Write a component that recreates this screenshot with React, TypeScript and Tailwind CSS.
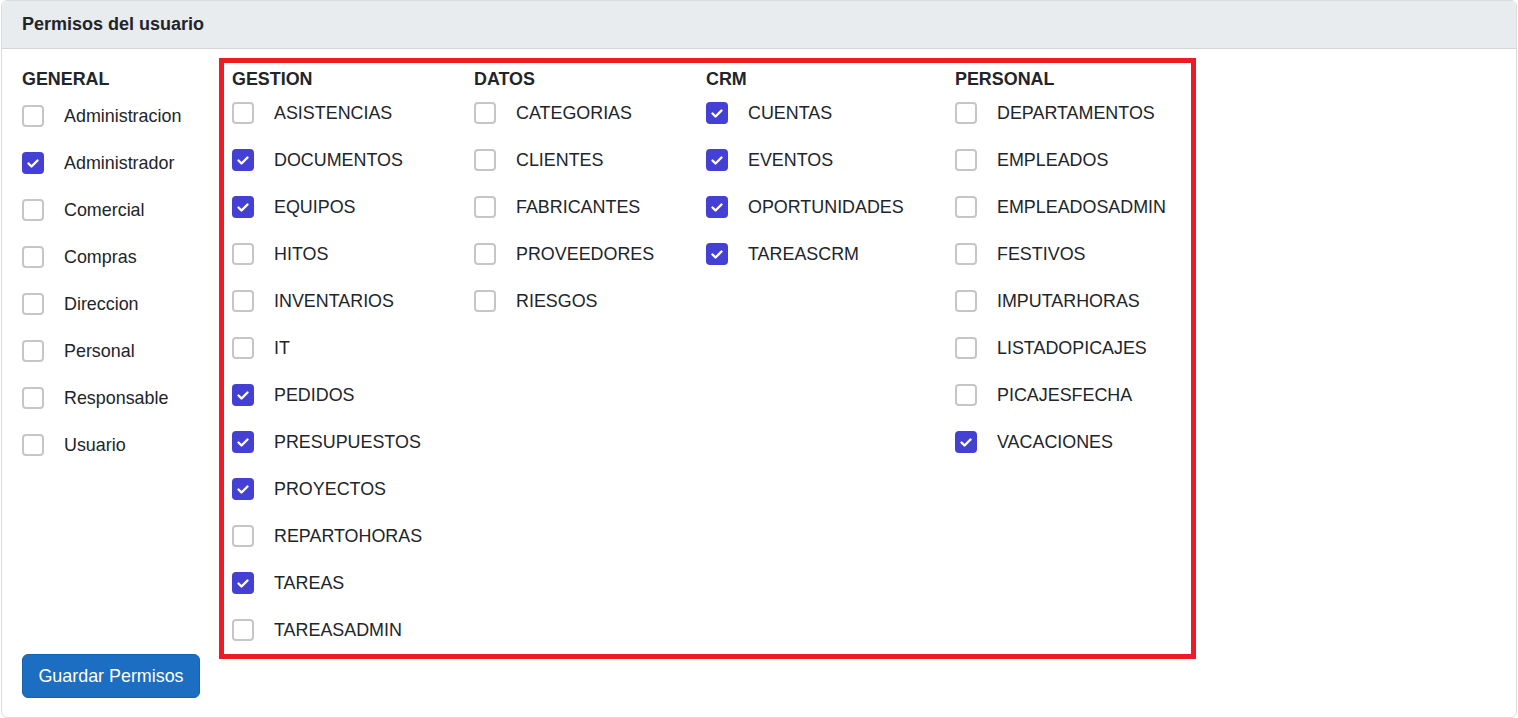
import React from "react";

type Perm = { name: string; on: boolean };

const general: Perm[] = [
  { name: "Administracion", on: false },
  { name: "Administrador", on: true },
  { name: "Comercial", on: false },
  { name: "Compras", on: false },
  { name: "Direccion", on: false },
  { name: "Personal", on: false },
  { name: "Responsable", on: false },
  { name: "Usuario", on: false },
];

const groups: { title: string; width: string; items: Perm[] }[] = [
  {
    title: "GESTION",
    width: "w-[242px]",
    items: [
      { name: "ASISTENCIAS", on: false },
      { name: "DOCUMENTOS", on: true },
      { name: "EQUIPOS", on: true },
      { name: "HITOS", on: false },
      { name: "INVENTARIOS", on: false },
      { name: "IT", on: false },
      { name: "PEDIDOS", on: true },
      { name: "PRESUPUESTOS", on: true },
      { name: "PROYECTOS", on: true },
      { name: "REPARTOHORAS", on: false },
      { name: "TAREAS", on: true },
      { name: "TAREASADMIN", on: false },
    ],
  },
  {
    title: "DATOS",
    width: "w-[232px]",
    items: [
      { name: "CATEGORIAS", on: false },
      { name: "CLIENTES", on: false },
      { name: "FABRICANTES", on: false },
      { name: "PROVEEDORES", on: false },
      { name: "RIESGOS", on: false },
    ],
  },
  {
    title: "CRM",
    width: "w-[249px]",
    items: [
      { name: "CUENTAS", on: true },
      { name: "EVENTOS", on: true },
      { name: "OPORTUNIDADES", on: true },
      { name: "TAREASCRM", on: true },
    ],
  },
  {
    title: "PERSONAL",
    width: "w-[240px]",
    items: [
      { name: "DEPARTAMENTOS", on: false },
      { name: "EMPLEADOS", on: false },
      { name: "EMPLEADOSADMIN", on: false },
      { name: "FESTIVOS", on: false },
      { name: "IMPUTARHORAS", on: false },
      { name: "LISTADOPICAJES", on: false },
      { name: "PICAJESFECHA", on: false },
      { name: "VACACIONES", on: true },
    ],
  },
];

function Check({ on }: { on: boolean }) {
  if (on) {
    return (
      <span className="w-[22px] h-[22px] rounded-[4px] bg-[#4540d4] flex items-center justify-center flex-shrink-0">
        <svg width="20" height="20" viewBox="0 0 20 20" fill="none">
          <path d="M5.5 10.5l3 3l6-6" stroke="#fff" strokeWidth="2.4" strokeLinecap="round" strokeLinejoin="round" />
        </svg>
      </span>
    );
  }
  return <span className="w-[22px] h-[22px] rounded-[4px] border-2 border-[#c6c6c6] bg-white flex-shrink-0" />;
}

function Row({ item }: { item: Perm }) {
  return (
    <div className="h-[47px] flex items-center gap-[20px]">
      <Check on={item.on} />
      <span className="leading-[26px] whitespace-nowrap">{item.name}</span>
    </div>
  );
}

export default function App() {
  return (
    <div
      className="relative mx-px h-[718px] border border-[#dcdcdc] rounded-[6px] bg-white text-[#212529] text-[17.9px]"
      style={{ fontFamily: '"Liberation Sans", Arial, sans-serif' }}
    >
      <div className="h-[48px] px-[20px] flex items-center bg-[#e9ecef] border-b border-[#d2d4d7] rounded-t-[6px]">
        <span className="font-bold text-[18px]">Permisos del usuario</span>
      </div>

      <div className="pl-[20px] pt-[18px]">
        <div className="flex">
          <div className="w-[210px]">
            <h3 className="font-bold leading-[24px] -mb-[2px]">GENERAL</h3>
            <div className="mt-[3px]">
              {general.map((p) => (
                <Row key={p.name} item={p} />
              ))}
            </div>
          </div>
          {groups.map((g) => (
            <div key={g.title} className={g.width}>
              <h3 className="font-bold leading-[24px] -mb-[2px]">{g.title}</h3>
              {g.items.map((p) => (
                <Row key={p.name} item={p} />
              ))}
            </div>
          ))}
        </div>

        <button className="mt-px h-[44px] w-[178px] rounded-[6px] bg-[#1b6ec2] border border-[#1861ac] text-white">
          Guardar Permisos
        </button>
      </div>

      {/* highlight annotation */}
      <div className="absolute left-[217px] top-[57px] w-[977px] h-[601px] border-[5px] border-[#ed1c24] pointer-events-none" />
    </div>
  );
}
